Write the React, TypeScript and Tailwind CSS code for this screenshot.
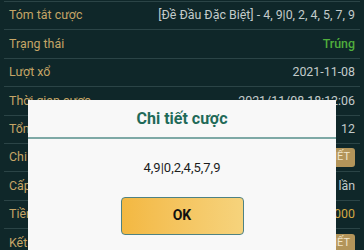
import React from 'react'

type Row = { label: string; value: string; kind?: 'text' | 'win' | 'badge' | 'gold' }

const rows: Row[] = [
  { label: 'Tóm tắt cược', value: '[Đề Đầu Đặc Biệt] - 4, 9|0, 2, 4, 5, 7, 9' },
  { label: 'Trạng thái', value: 'Trúng', kind: 'win' },
  { label: 'Lượt xổ', value: '2021-11-08' },
  { label: 'Thời gian cược', value: '2021/11/08 18:12:06' },
  { label: 'Tổng số cược', value: '12' },
  { label: 'Chi tiết cược', value: 'CHI TIẾT', kind: 'badge' },
  { label: 'Cấp số nhân', value: '1 lần' },
  { label: 'Tiền cược', value: '12,000', kind: 'gold' },
  { label: 'Kết quả', value: 'CHI TIẾT', kind: 'badge' },
]

const RowValue = ({ row }: { row: Row }) => {
  if (row.kind === 'win') return <span className="font-medium text-[#4fae3c]">{row.value}</span>
  if (row.kind === 'gold') return <span className="text-[#d2a843]">{row.value}</span>
  if (row.kind === 'badge')
    return (
      <span className="rounded-[3px] bg-[#b3955a] px-[5px] py-[1px] text-[11px] text-[#f1e6cc]">{row.value}</span>
    )
  return <span className="text-[#c3cbcb]">{row.value}</span>
}

export default function App() {
  return (
    <div className="relative h-[250px] w-[364px] overflow-hidden bg-[#0f2729] font-['Roboto',sans-serif]">
      {/* danh sách chi tiết phía sau */}
      <ul className="mx-[4px] pt-[1px]">
        {rows.map((row) => (
          <li
            key={row.label}
            className="flex h-[28.4px] items-center justify-between border-t border-[#2b4446] px-[5px] text-[12.4px]"
          >
            <span className="text-[#c5a566]">{row.label}</span>
            <RowValue row={row} />
          </li>
        ))}
      </ul>

      {/* hộp thoại */}
      <div className="absolute inset-0">
        <div className="absolute left-[28px] top-[100px] w-[308px] bg-[#f8f8f8]">
          <h2 className="flex h-[37px] items-center justify-center text-[16px] font-bold text-[#1f6a58]">
            Chi tiết cược
          </h2>
          <div className="h-[2px] bg-[#7ea9a6]" />
          <p className="pt-[19px] text-center text-[13px] text-[#1c1c1c]">4,9|0,2,4,5,7,9</p>
          <div className="flex justify-center pt-[19px] pb-[24px]">
            <button className="h-[38px] w-[123px] rounded-[4px] border border-[#4f8283] bg-gradient-to-r from-[#f3b841] to-[#f6d37c] text-[14px] font-bold text-[#111]">
              OK
            </button>
          </div>
        </div>
      </div>
    </div>
  )
}
